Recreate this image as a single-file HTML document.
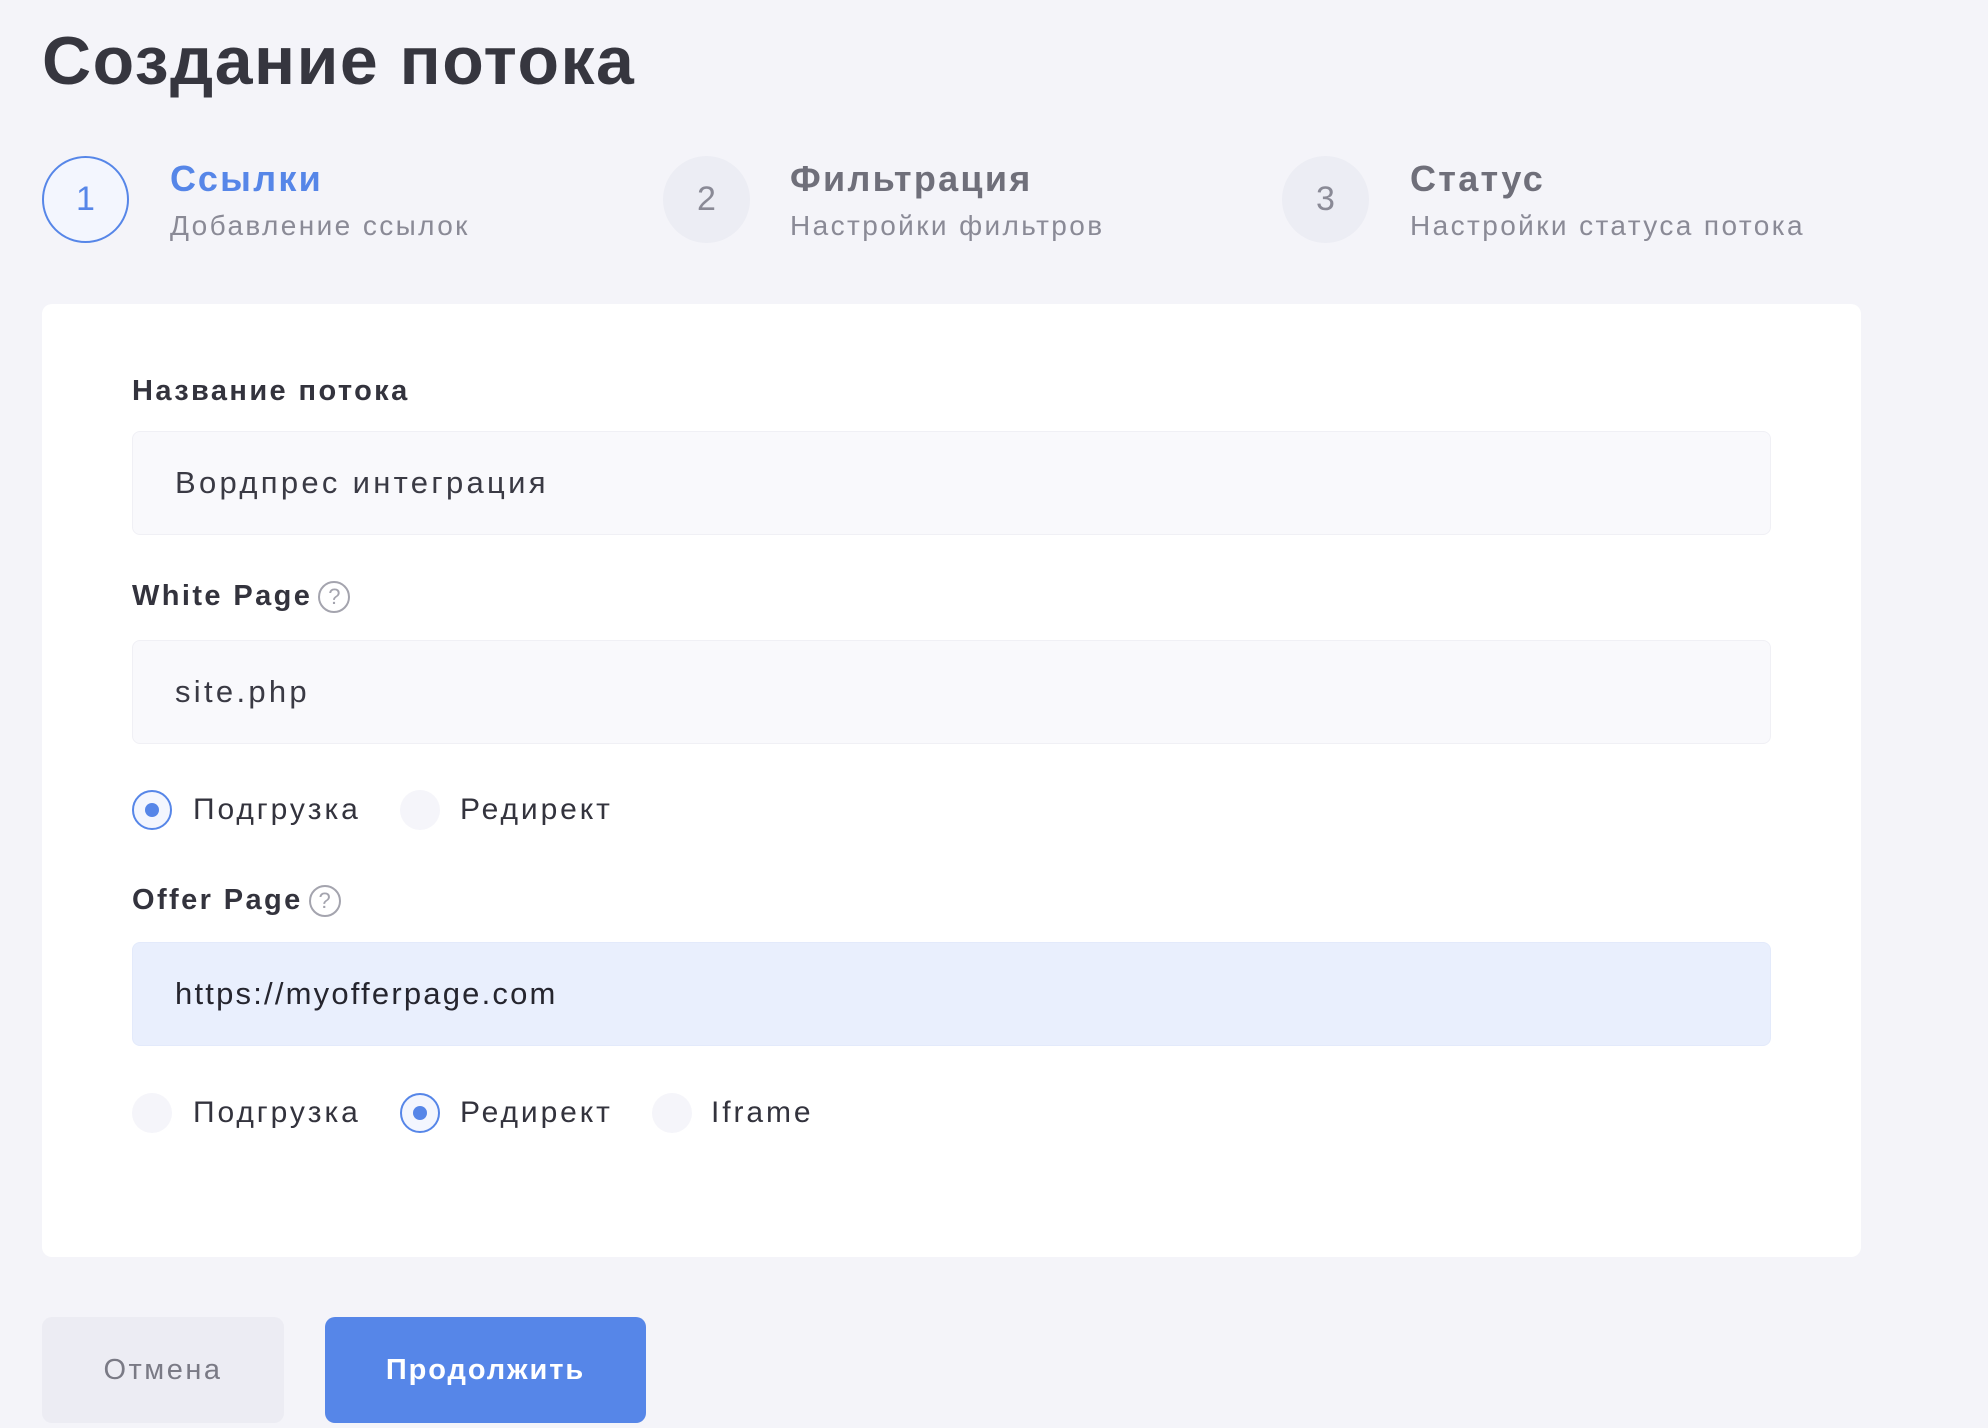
<!DOCTYPE html>
<html><head><meta charset="utf-8"><style>
*{box-sizing:border-box;margin:0;padding:0}
body{width:1988px;height:1428px;background:#f4f4f9;font-family:"Liberation Sans",sans-serif;color:#33333d;position:relative;overflow:hidden}
.a{position:absolute;white-space:nowrap}
h1{position:absolute;left:42px;top:22px;font-size:68px;font-weight:bold;color:#36363f;letter-spacing:1.5px}
.circ{position:absolute;width:87px;height:87px;border-radius:50%;background:#ecedf4;color:#8a8a96;font-size:34px;display:flex;align-items:center;justify-content:center}
.circ.on{background:#f3f6fe;border:2px solid #5686e8;color:#5686e8}
.st{font-size:36px;font-weight:bold;color:#6f6f7a;letter-spacing:2.3px}
.ss{font-size:28px;color:#8a8a96;letter-spacing:2.4px}
.card{position:absolute;left:42px;top:304px;width:1819px;height:953px;background:#fff;border-radius:10px}
.lbl{font-size:29px;font-weight:bold;color:#33333d;letter-spacing:2.4px}
.inp{position:absolute;left:132px;width:1639px;height:104px;background:#f9f9fc;border:1px solid #f0f0f5;border-radius:8px;font-size:31px;padding-left:42px;display:flex;align-items:center;color:#3a3a44;letter-spacing:3.3px}
.rad{position:absolute;width:40px;height:40px;border-radius:50%;background:#f5f5fa}
.rad.on{background:#f3f6fe;border:2px solid #5686e8}
.rad.on::after{content:"";position:absolute;left:11px;top:11px;width:14px;height:14px;border-radius:50%;background:#5686e8}
.rl{font-size:30px;color:#33333d;letter-spacing:2.9px}
.q{display:inline-block;width:32px;height:32px;border:2px solid #a4a4ae;border-radius:50%;color:#a4a4ae;font-size:22px;text-align:center;line-height:28px;font-weight:normal;vertical-align:middle;margin-left:6px;letter-spacing:0}
.btn{position:absolute;top:1317px;height:106px;border-radius:10px;display:flex;align-items:center;justify-content:center;font-size:29px}
</style></head><body>
<h1>Создание потока</h1>
<div class="circ on" style="left:42px;top:156px">1</div>
<div class="a st" style="left:170px;top:158px;color:#5686e8">Ссылки</div>
<div class="a ss" style="left:170px;top:210px">Добавление ссылок</div>
<div class="circ" style="left:663px;top:156px">2</div>
<div class="a st" style="left:790px;top:158px">Фильтрация</div>
<div class="a ss" style="left:790px;top:210px">Настройки фильтров</div>
<div class="circ" style="left:1282px;top:156px">3</div>
<div class="a st" style="left:1410px;top:158px">Статус</div>
<div class="a ss" style="left:1410px;top:210px">Настройки статуса потока</div>
<div class="card"></div>
<div class="a lbl" style="left:132px;top:375px">Название потока</div>
<div class="inp" style="top:431px">Вордпрес интеграция</div>
<div class="a lbl" style="left:132px;top:580px">White Page<span class="q">?</span></div>
<div class="inp" style="top:640px">site.php</div>
<div class="rad on" style="left:132px;top:790px"></div><div class="a rl" style="left:193px;top:793px">Подгрузка</div>
<div class="rad" style="left:400px;top:790px"></div><div class="a rl" style="left:460px;top:793px">Редирект</div>
<div class="a lbl" style="left:132px;top:884px">Offer Page<span class="q">?</span></div>
<div class="inp" style="top:942px;background:#e9effd;border-color:#e3eafb;color:#25252e;letter-spacing:2.2px">https://myofferpage.com</div>
<div class="rad" style="left:132px;top:1093px"></div><div class="a rl" style="left:193px;top:1096px">Подгрузка</div>
<div class="rad on" style="left:400px;top:1093px"></div><div class="a rl" style="left:460px;top:1096px">Редирект</div>
<div class="rad" style="left:652px;top:1093px"></div><div class="a rl" style="left:711px;top:1096px">Iframe</div>
<div class="btn" style="left:42px;width:242px;background:#ececf3;color:#7a7a85;letter-spacing:2.5px">Отмена</div>
<div class="btn" style="left:325px;width:321px;background:#5686e8;color:#fff;font-weight:bold;letter-spacing:1.9px">Продолжить</div>
</body></html>
